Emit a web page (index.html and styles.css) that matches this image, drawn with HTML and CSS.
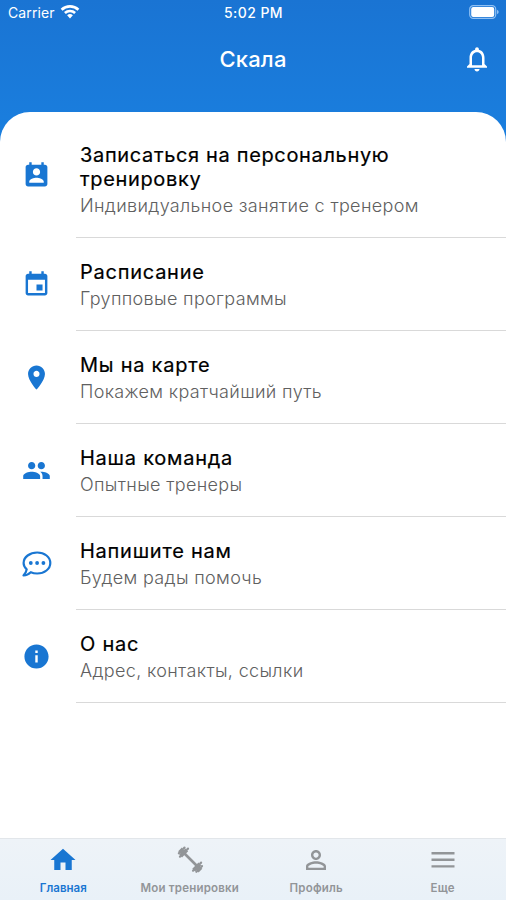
FILE: index.html
```html
<!DOCTYPE html>
<html lang="ru">
<head>
<meta charset="utf-8">
<title>Скала</title>
<link rel="stylesheet" href="styles.css">
</head>
<body>
<div class="app">
  <header class="header">
    <div class="status">
      <div class="carrier"><span>Carrier</span>
        <svg class="wifi" viewBox="0 0 18 14"><path d="M.3 4.400a12.600 12.600 0 0 1 17.400 0L16 6.300a10 10 0 0 0-14 0zM3.400 7.500a8.100 8.100 0 0 1 11.200 0l-1.700 1.800a5.700 5.700 0 0 0-7.800 0zM6.300 10.500a4 4 0 0 1 5.400 0L9 13.500z"/></svg>
      </div>
      <span class="time">5:02 PM</span>
      <svg class="battery" viewBox="0 0 30 14"><rect class="shell" x=".7" y=".6" width="26" height="12.800" rx="3.600"/><rect x="2.200" y="2.100" width="23" height="9.800" rx="2"/><path class="cap" d="M28 4.800q1.700.7 1.700 2.200t-1.700 2.200z"/></svg>
    </div>
    <div class="toolbar">
      <h1>Скала</h1>
      <svg class="bell" viewBox="0 0 24 24"><path d="M12 22c1.100 0 2-.9 2-2h-4c0 1.100.9 2 2 2zm6-6v-5c0-3.070-1.630-5.640-4.500-6.320V4c0-.83-.67-1.500-1.500-1.500s-1.500.67-1.500 1.500v.68C7.640 5.360 6 7.920 6 11v5l-2 2v1h16v-1l-2-2zm-2 1H8v-6c0-2.480 1.510-4.500 4-4.500s4 2.020 4 4.500v6z"/></svg>
    </div>
  </header>
  <main class="card">
    <div class="row first">
      <svg class="icon" viewBox="0 0 24 24"><path d="M19 3h-1V1h-2v2H8V1H6v2H5c-1.110 0-2 .9-2 2v14c0 1.100.89 2 2 2h14c1.100 0 2-.9 2-2V5c0-1.100-.9-2-2-2zm-7 3c1.660 0 3 1.340 3 3s-1.340 3-3 3-3-1.340-3-3 1.340-3 3-3zm6 12H6v-1c0-2 4-3.100 6-3.100s6 1.100 6 3.100v1z"/></svg>
      <div class="text"><h2>Записаться на персональную<br>тренировку</h2><p>Индивидуальное занятие с тренером</p></div>
    </div>
    <div class="row">
      <svg class="icon" viewBox="0 0 24 24"><path d="M17 12h-5v5h5v-5zM16 1v2H8V1H6v2H5c-1.110 0-1.990.9-1.990 2L3 19c0 1.100.89 2 2 2h14c1.100 0 2-.9 2-2V5c0-1.100-.9-2-2-2h-1V1h-2zm3 18H5V8h14v11z"/></svg>
      <div class="text"><h2>Расписание</h2><p>Групповые программы</p></div>
    </div>
    <div class="row">
      <svg class="icon" viewBox="0 0 24 24"><path d="M12 2C8.130 2 5 5.130 5 9c0 5.250 7 13 7 13s7-7.750 7-13c0-3.870-3.130-7-7-7zm0 9.500c-1.380 0-2.500-1.120-2.500-2.500s1.120-2.500 2.500-2.500 2.500 1.120 2.500 2.500-1.120 2.500-2.500 2.500z"/></svg>
      <div class="text"><h2>Мы на карте</h2><p>Покажем кратчайший путь</p></div>
    </div>
    <div class="row">
      <svg class="icon" viewBox="0 0 24 24"><path d="M16 11c1.660 0 2.990-1.340 2.990-3S17.660 5 16 5c-1.660 0-3 1.340-3 3s1.340 3 3 3zm-8 0c1.660 0 2.990-1.340 2.990-3S9.660 5 8 5C6.340 5 5 6.340 5 8s1.340 3 3 3zm0 2c-2.330 0-7 1.170-7 3.500V19h14v-2.500c0-2.330-4.670-3.500-7-3.500zm8 0c-.29 0-.62.02-.97.05 1.160.84 1.970 1.970 1.970 3.450V19h6v-2.500c0-2.330-4.670-3.500-7-3.500z"/></svg>
      <div class="text"><h2>Наша команда</h2><p>Опытные тренеры</p></div>
    </div>
    <div class="row">
      <svg class="icon chat" viewBox="0 0 30 26"><path class="bubble" d="M15.200 1.500C22.500 1.500 28.300 6 28.300 12s-5.800 10.500-13.100 10.500c-2.400 0-4.500-.4-6.400-1.300-1.900 1.900-4.200 3.100-7.300 3.200 1.700-1.900 2.900-3.900 3.200-6.100C2.700 16.600 1.600 14.500 1.600 12 1.600 6 7.900 1.500 15.200 1.500z"/><circle cx="8.800" cy="12" r="1.900"/><circle cx="15.100" cy="12" r="1.900"/><circle cx="21.400" cy="12" r="1.900"/></svg>
      <div class="text"><h2>Напишите нам</h2><p>Будем рады помочь</p></div>
    </div>
    <div class="row">
      <svg class="icon" viewBox="0 0 24 24"><path d="M12 2C6.480 2 2 6.480 2 12s4.480 10 10 10 10-4.480 10-10S17.520 2 12 2zm1 15h-2v-6h2v6zm0-8h-2V7h2v2z"/></svg>
      <div class="text"><h2>О нас</h2><p>Адрес, контакты, ссылки</p></div>
    </div>
  </main>
  <nav class="tabs">
    <div class="tab active"><svg viewBox="0 0 24 24"><path d="M10 20v-6h4v6h5v-8h3L12 3 2 12h3v8z"/></svg><span>Главная</span></div>
    <div class="tab"><svg viewBox="0 0 30 30"><path class="bar" d="M8 7l14.500 14.500"/><path class="plate" d="M11.800 4.800L5.600 11M8.300 4L4.600 7.700M24.900 18.900l-6.200 6.200M25.900 22.300l-3.700 3.700"/><path class="knurl" d="M13 3.600L4.400 12.200M9.500 2.600L3.400 8.700M26.100 17.600l-8.600 8.600M27 21.100l-6.100 6.100"/></svg><span>Мои тренировки</span></div>
    <div class="tab"><svg viewBox="0 0 24 24"><path d="M12 5.900c1.160 0 2.100.94 2.100 2.100s-.94 2.100-2.100 2.100S9.900 9.160 9.900 8s.94-2.100 2.100-2.100m0 9c2.970 0 6.100 1.460 6.100 2.100v1.100H5.900V17c0-.64 3.130-2.100 6.100-2.100M12 4C9.790 4 8 5.790 8 8s1.790 4 4 4 4-1.790 4-4-1.790-4-4-4zm0 9c-2.670 0-8 1.340-8 4v3h16v-3c0-2.660-5.330-4-8-4z"/></svg><span>Профиль</span></div>
    <div class="tab"><svg viewBox="0 0 30 30"><path d="M3.500 7h23v2.400h-23zM3.500 13.600h23V16h-23zM3.500 20.200h23v2.400h-23z"/></svg><span>Еще</span></div>
  </nav>
</div>
</body>
</html>
```
FILE: styles.css
```css
* { box-sizing: border-box; }
body, h1, h2, p { margin: 0; }
body { font-family: Inter, "Noto Sans", sans-serif; background: #fff; }
svg { display: block; flex: none; }
.app {
  height: 900px;
  display: flex;
  flex-direction: column;
  background: linear-gradient(#1a74d3, #1a7fdf 142px, #fff 142px);
}
.header { height: 112px; color: #fff; }
.header svg { fill: #fff; }
.status {
  height: 25px;
  padding: 0 7px 0 8px;
  display: grid;
  grid-template-columns: 1fr auto 1fr;
  align-items: center;
}
.carrier { display: flex; align-items: center; gap: 5px; font-size: 14px; letter-spacing: 0.1px; }
.wifi { width: 20px; height: 15px; margin-top: -2px; }
.time { font-size: 14px; font-weight: 500; letter-spacing: 0.45px; }
.battery { width: 30px; height: 14px; justify-self: end; margin-top: -1px; }
.header .shell { fill: none; stroke: #8fc0f3; stroke-width: 1.2; }
.header .cap { fill: #8fc0f3; }
.toolbar {
  height: 68px;
  padding: 0 14px;
  display: grid;
  grid-template-columns: 30px 1fr 30px;
  align-items: center;
}
h1 { grid-column: 2; text-align: center; font-size: 22px; line-height: 28px; font-weight: 500; letter-spacing: 0.2px; }
.bell { width: 30px; height: 30px; }
.card { flex: 1; background: #fff; border-radius: 30px 30px 0 0; }
.row { height: 93px; display: flex; align-items: center; }
.first { height: 126px; }
.icon { width: 29px; height: 29px; margin: 0 24px 0 22px; fill: #1976d2; }
.chat { height: 26px; width: 30px; margin: 0 23.5px 0 21.5px; }
.bubble { fill: none; stroke: #1976d2; stroke-width: 2.2; stroke-linejoin: round; }
.text {
  flex: 1;
  align-self: stretch;
  margin-left: 1px;
  padding: 3px 0 0 4px;
  display: flex;
  flex-direction: column;
  justify-content: center;
  border-bottom: 1px solid #d9d9d9;
}
.first .text { padding-top: 12px; }
h2 { font-size: 20px; line-height: 24px; font-weight: 400; letter-spacing: 0.65px; color: #000; -webkit-text-stroke: 0.2px #000; white-space: nowrap; }
p { margin-top: 3px; font-size: 18px; line-height: 24px; font-weight: 300; letter-spacing: 0.34px; color: #606060; white-space: nowrap; }
.row:not(.first) h2 { letter-spacing: 0.75px; }
.tabs {
  height: 62px;
  border-top: 1px solid #e2e6ea;
  background: linear-gradient(#eef3f8, #e9f1f8);
  display: grid;
  grid-template-columns: repeat(4, 1fr);
  color: #929598;
}
.tab { display: flex; flex-direction: column; align-items: center; padding-top: 6px; }
.tab svg { width: 30px; height: 30px; fill: currentColor; }
.tab span { margin-top: 6px; font-size: 11.5px; line-height: 15px; font-weight: 600; letter-spacing: 0.2px; white-space: nowrap; }
.active { color: #1976d2; }
.tab.active span { letter-spacing: 0; }
.tab .bar, .tab .plate, .tab .knurl { fill: none; stroke: currentColor; }
.bar { stroke-width: 2.6; }
.plate { stroke-width: 4; }
.knurl { stroke-width: 2.2; stroke-linecap: round; stroke-dasharray: 1.2 2.2; }
```
